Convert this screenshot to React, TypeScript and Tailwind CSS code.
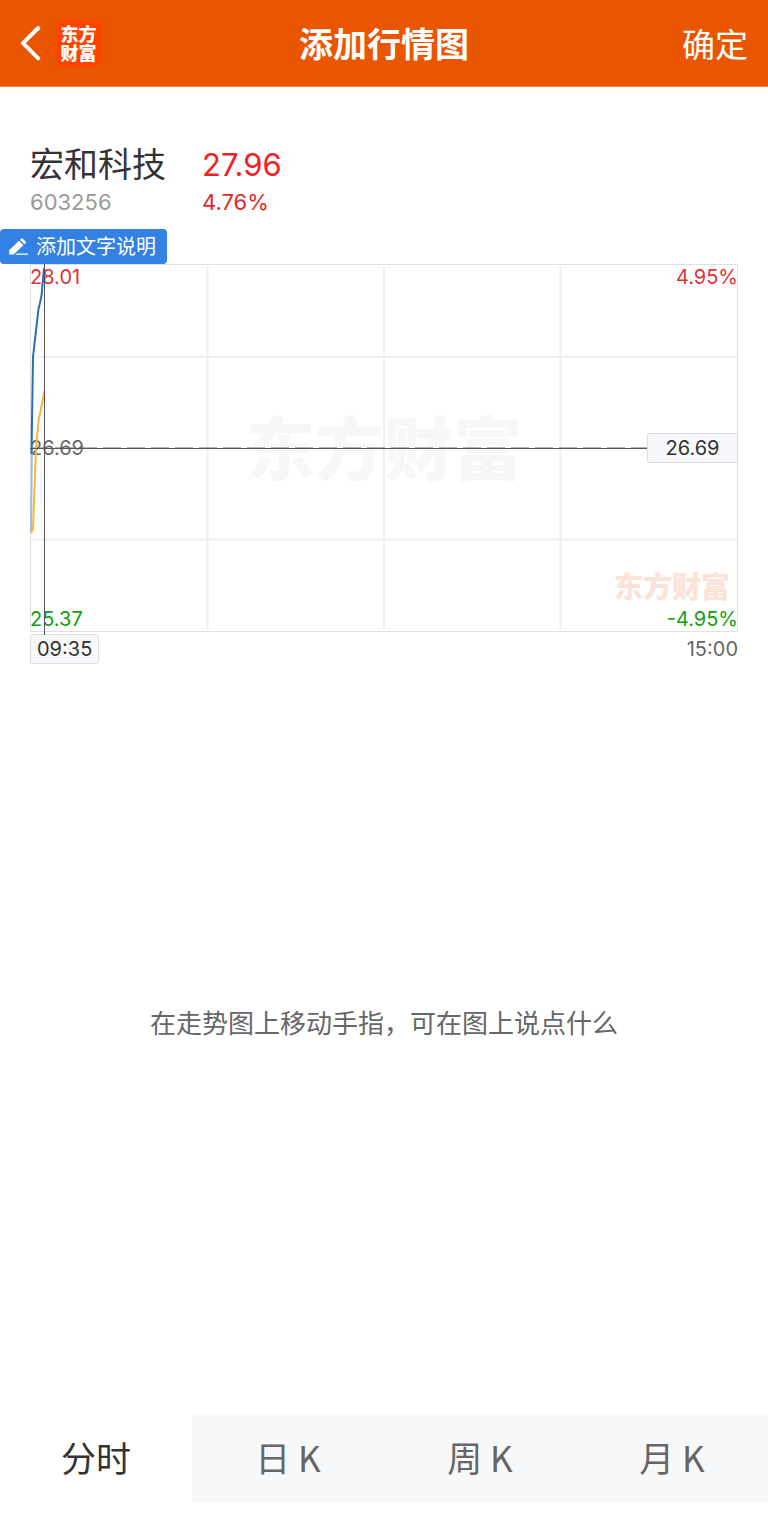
import { useState } from "react";

const tabs = ["分时", "日 K", "周 K", "月 K"];

function Header() {
  return (
    <header className="grid h-[87px] shrink-0 grid-cols-[1fr_auto_1fr] items-center border-b border-[#f0834a] bg-[#ea5500] px-5 text-white">
      <div className="flex items-center gap-[11px]">
        <button type="button" aria-label="返回" className="flex h-12 w-6 items-center">
          <svg viewBox="0 0 24 36" className="h-9 w-6" fill="none" stroke="currentColor" strokeWidth="4" strokeLinecap="round" strokeLinejoin="round">
            <path d="M18.2 3 3 18.2 18.2 33.4" />
          </svg>
        </button>
        <div className="flex size-[47px] flex-col items-center justify-center rounded-[10px] bg-[#ff4400] pt-0.5 text-[18px] leading-[19px] font-black">
          <span>东方</span>
          <span>财富</span>
        </div>
      </div>
      <h1 className="pt-1 text-[34px] leading-[48px] font-bold">添加行情图</h1>
      <button type="button" className="justify-self-end pt-1 text-[33px] leading-[48px]">
        确定
      </button>
    </header>
  );
}

function Quote() {
  return (
    <section className="flex gap-9 px-[30px] pt-[57px]">
      <div>
        <h2 className="text-[34px] leading-[42px] text-[#333333]">宏和科技</h2>
        <p className="text-[22px] leading-8 text-[#999999]">603256</p>
      </div>
      <div>
        <p className="text-[31px] leading-[42px] text-[#f2201f]">27.96</p>
        <p className="text-[22px] leading-8 text-[#e0282c]">4.76%</p>
      </div>
    </section>
  );
}

function Chart() {
  return (
    <section className="px-[30px]">
      <div className="relative h-[368px] border border-[#dfdfe6] text-[20px] leading-6">
        <div className="absolute inset-0 flex items-center justify-center pt-1 text-[69px] leading-none font-black text-[#f7f7f7]">
          东方财富
        </div>
        <div className="absolute right-[7px] bottom-[27px] text-[29px] leading-8 font-black text-[#fce3d8]">东方财富</div>
        <svg className="absolute inset-0 size-full" strokeWidth="2" aria-hidden="true">
          <g stroke="#eeeef3">
            <line x1="0" x2="100%" y1="25.1%" y2="25.1%" />
            <line x1="0" x2="100%" y1="75%" y2="75%" />
            <line x1="25%" x2="25%" y1="2" y2="364" />
            <line x1="50%" x2="50%" y1="2" y2="364" />
            <line x1="75%" x2="75%" y1="2" y2="364" />
          </g>
          <line x1="0" x2="100%" y1="183" y2="183" stroke="#b5b5b5" strokeDasharray="18 6" />
        </svg>
        <span className="absolute top-0 -left-px text-[#e23237]">28.01</span>
        <span className="absolute top-0 -right-px text-[#e23237]">4.95%</span>
        <span className="absolute top-[171px] -left-px text-[#666666]">26.69</span>
        <span className="absolute bottom-0 -left-px text-[#12a012]">25.37</span>
        <span className="absolute -right-px bottom-0 text-[#12a012]">-4.95%</span>
        <svg viewBox="0 0 16 368" className="absolute -top-px -left-px h-[368px] w-4" fill="none" strokeWidth="2" strokeLinejoin="round">
          <path d="M1 268 2 180" stroke="#9dbde6" />
          <path d="M1.5 190 3 93 8.5 45 11.5 32 14 4" stroke="#2b6cb8" />
          <path d="M1 269 3 265 6 184 8.5 157 14.5 127" stroke="#f8b63c" />
        </svg>
        <div className="absolute -top-px -bottom-1 left-[13px] w-px bg-[#555555]" />
        <div className="absolute top-[183px] right-0 -left-px h-px bg-[#555555]" />
        <div className="absolute top-[168px] -right-px flex h-[30px] w-[91px] items-center justify-center rounded-[3px] border border-[#dcdde4] bg-[#f7f8fa] text-[#333333]">
          26.69
        </div>
      </div>
      <div className="flex items-center justify-between pt-0.5 text-[20px] leading-7 text-[#666666]">
        <time className="rounded-[3px] border border-[#dcdde4] bg-[#f7f8fa] px-1.5 text-[#333333]">09:35</time>
        <time>15:00</time>
      </div>
    </section>
  );
}

export default function App() {
  const [active, setActive] = useState(0);
  return (
    <div className="flex min-h-screen flex-col bg-white font-['Inter','Noto_Sans_CJK_SC',sans-serif]">
      <Header />
      <Quote />
      <button
        type="button"
        className="mt-[11px] flex h-[35px] items-center gap-2 self-start rounded-[4px] bg-[#3381e3] pr-[11px] pl-2 text-[20px] leading-7 text-white"
      >
        <svg viewBox="0 0 20 20" className="size-5" fill="currentColor" aria-hidden="true">
          <path d="M1.2 17.6v-4.4L11 3.8l4.4 4.4L5.6 17.6zM12 2.8l1.1-1.1a1.2 1.2 0 0 1 1.7 0l2.8 2.8a1.2 1.2 0 0 1 0 1.7l-1.2 1.1z" />
          <path d="M8.5 16.6H20v1.2H7.3z" />
        </svg>
        添加文字说明
      </button>
      <Chart />
      <main className="flex flex-1 items-center justify-center pb-[30px]">
        <p className="text-[26px] leading-9 text-[#666666]">在走势图上移动手指，可在图上说点什么</p>
      </main>
      <nav className="mb-9 grid h-[88px] grid-cols-4 font-['Noto_Sans_CJK_SC',sans-serif] text-[35px]">
        {tabs.map((tab, i) => (
          <button
            key={tab}
            type="button"
            aria-pressed={i === active}
            onClick={() => setActive(i)}
            className={i === active ? "bg-white pb-0.5 text-[#333333]" : "bg-[#f7f8fa] pb-0.5 text-[#666666]"}
          >
            {tab}
          </button>
        ))}
      </nav>
    </div>
  );
}
